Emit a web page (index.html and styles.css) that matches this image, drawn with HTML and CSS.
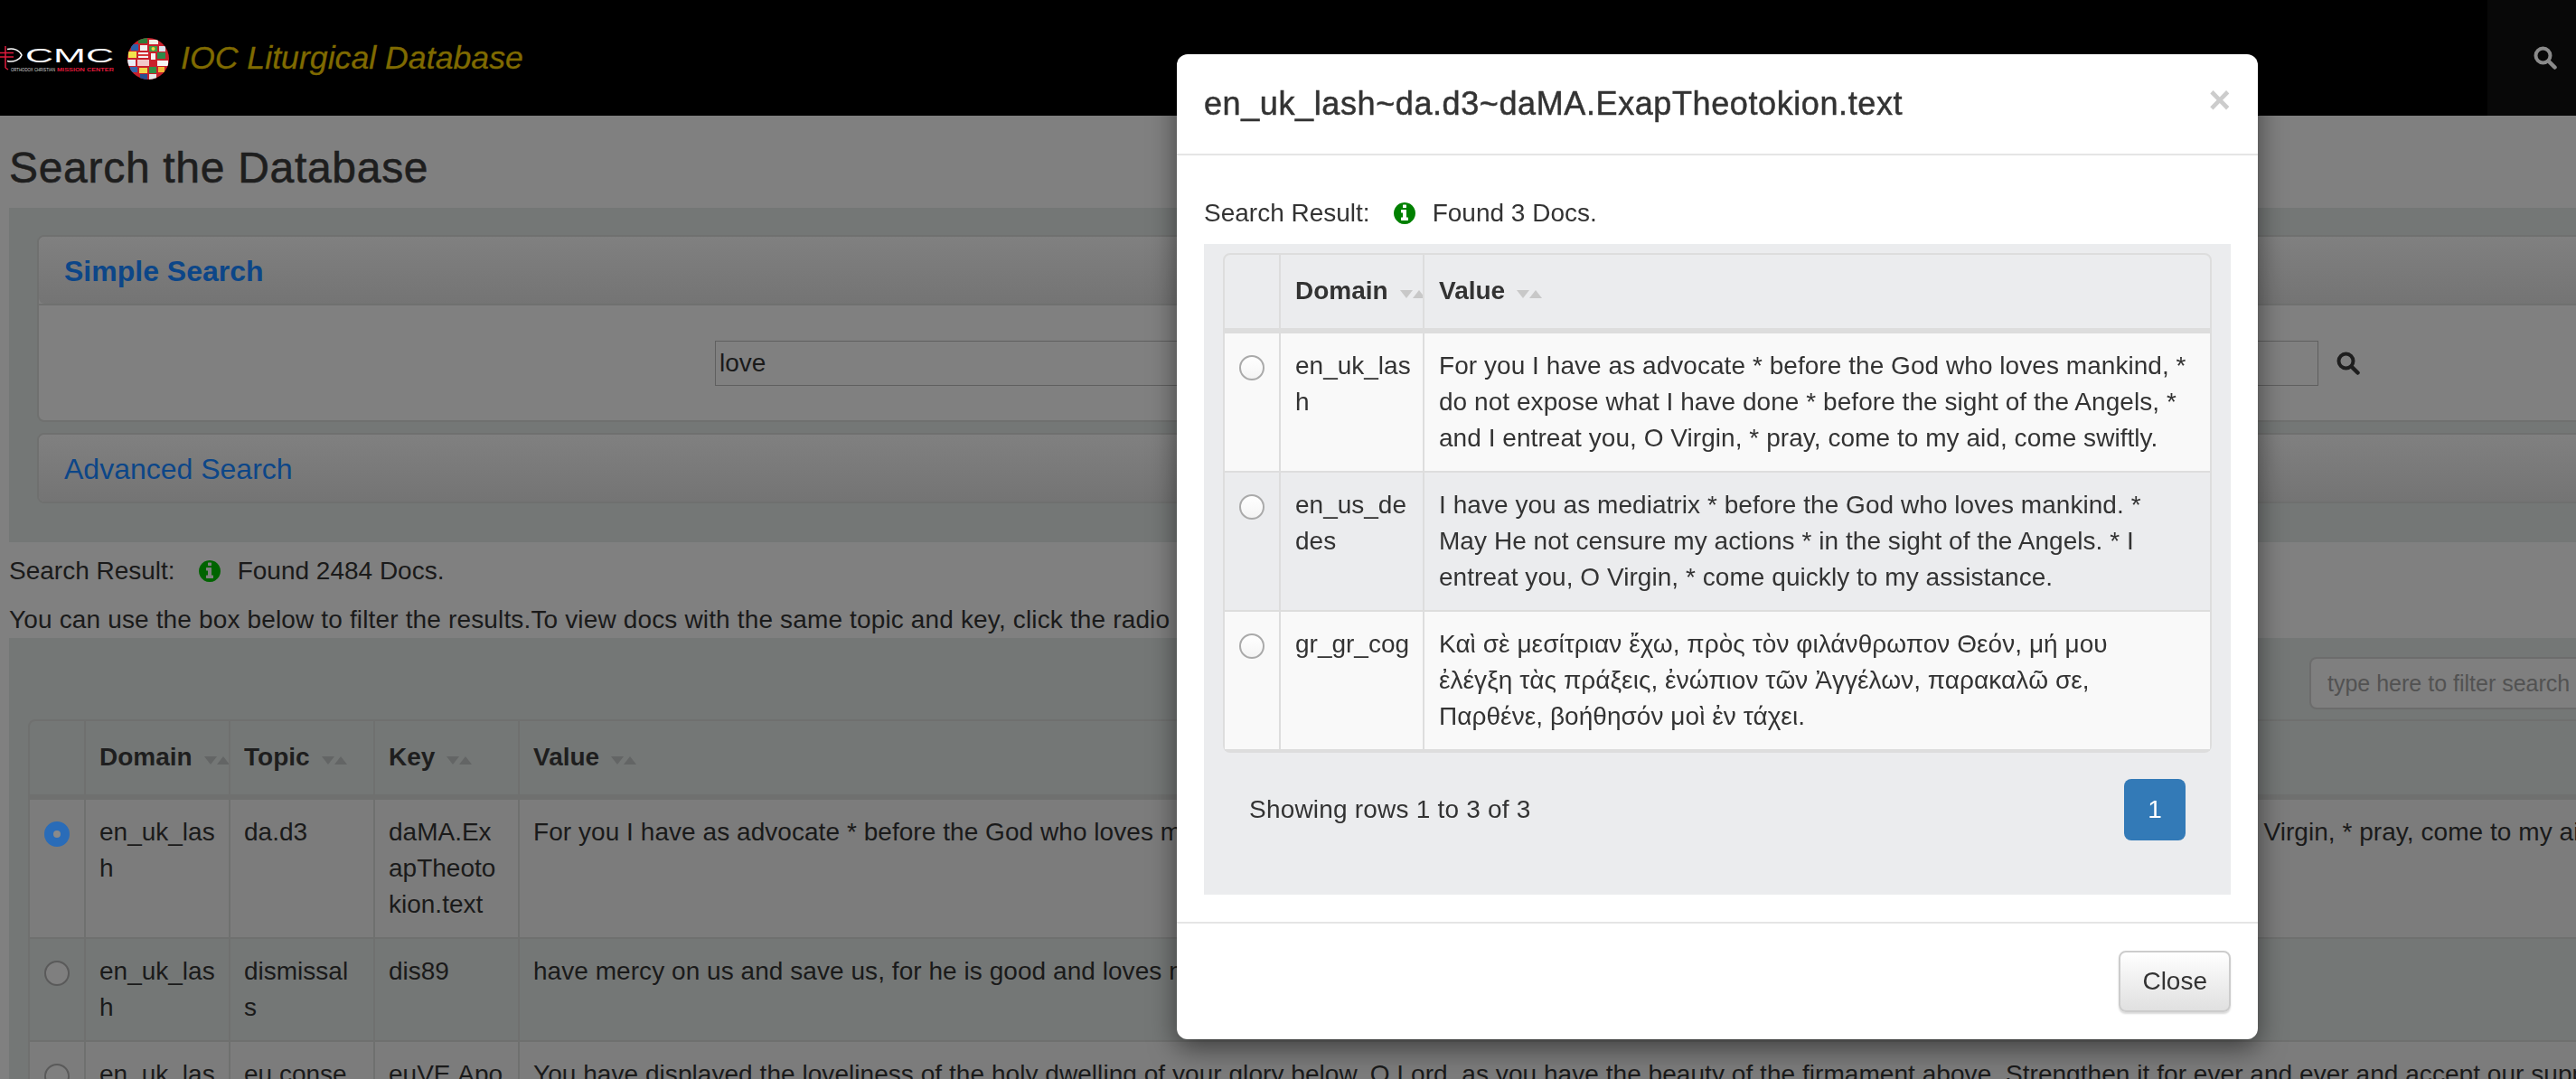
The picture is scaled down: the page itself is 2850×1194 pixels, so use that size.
FILE: index.html
```html
<!DOCTYPE html>
<html>
    <head>
        <meta charset="utf-8">
        <title>IOC Liturgical Database</title>
        <link rel="stylesheet" href="styles.css">
    </head>
    <body>
        <svg class="defs" width="0" height="0">
            <symbol id="i-info" viewBox="128 128 1536 1536">
                <path d="M1152 1376v-160q0-14-9-23t-23-9h-96v-512q0-14-9-23t-23-9h-320q-14 0-23 9t-9 23v160q0 14 9 23t23 9h96v320h-96q-14 0-23 9t-9 23v160q0 14 9 23t23 9h448q14 0 23-9t9-23zm-128-896v-160q0-14-9-23t-23-9h-192q-14 0-23 9t-9 23v160q0 14 9 23t23 9h192q14 0 23-9t9-23zm640 416q0 209-103 385.500t-279.500 279.500-385.500 103-385.500-103-279.500-279.500-103-385.500 103-385.500 279.500-279.500 385.500-103 385.500 103 279.500 279.500 103 385.500z"/>
            </symbol>
            <symbol id="i-search" viewBox="0 0 26 26">
                <circle cx="10.500" cy="10.500" r="8" fill="none" stroke="currentColor" stroke-width="4"/>
                <path d="M16.500 16.500L23.500 23.500" fill="none" stroke="currentColor" stroke-width="4.500" stroke-linecap="round"/>
            </symbol>
        </svg>

        <nav class="navbar">
            <svg class="logo" viewBox="0 48 126 32" width="126" height="32">
                <path class="logo-ring" d="M8 53.500C15 51.500 22 55 24 60C22 65 15 68.500 8 66.500"/>
                <path class="logo-cross" d="M6 50V74M0 57.500H15M0 62H15M6 74L9 76"/>
                <text class="logo-big" x="28" y="68" textLength="98" lengthAdjust="spacingAndGlyphs">CMC</text>
                <text class="logo-small" x="12" y="77.500" textLength="49" lengthAdjust="spacingAndGlyphs">ORTHODOX CHRISTIAN</text>
                <text class="logo-small logo-red" x="63" y="77.500" textLength="63" lengthAdjust="spacingAndGlyphs">MISSION CENTER</text>
            </svg>
            <svg class="globe" viewBox="0 0 46 46" width="46" height="46">
                <defs><clipPath id="globe-clip"><circle cx="23" cy="23" r="23"/></clipPath></defs>
                <g clip-path="url(#globe-clip)">
                    <rect width="46" height="46" fill="#c8202c"/>
                    <rect x="12" y="0" width="10" height="6" fill="#2f7d3a"/>
                    <rect x="24" y="2" width="10" height="5" fill="#f1efe4"/>
                    <rect x="4" y="7" width="8" height="7" fill="#2d5fa8"/>
                    <rect x="14" y="8" width="8" height="6" fill="#f2f2f2"/>
                    <rect x="24" y="9" width="9" height="6" fill="#3f9e47"/>
                    <circle cx="28.500" cy="12" r="2" fill="#f3d23a"/>
                    <rect x="35" y="9" width="7" height="6" fill="#d8e2ee"/>
                    <rect x="1" y="15" width="9" height="7" fill="#f2e34c"/>
                    <rect x="12" y="16" width="11" height="6" fill="#f4f4f4"/>
                    <rect x="12" y="18" width="11" height="2" fill="#d63a3a"/>
                    <rect x="26" y="17" width="5" height="7" fill="#f4f4f4"/>
                    <rect x="33" y="16" width="9" height="7" fill="#2c8a4a"/>
                    <rect x="0" y="24" width="9" height="7" fill="#e8eef6"/>
                    <rect x="11" y="24" width="13" height="7" fill="#f1c8c8"/>
                    <rect x="33" y="25" width="12" height="6" fill="#f5f5f5"/>
                    <rect x="3" y="32" width="8" height="6" fill="#3565ab"/>
                    <rect x="13" y="33" width="9" height="6" fill="#f0d84a"/>
                    <rect x="24" y="32" width="8" height="7" fill="#2f8f46"/>
                    <rect x="34" y="32" width="7" height="6" fill="#f0b93a"/>
                    <rect x="14" y="40" width="8" height="6" fill="#274f94"/>
                    <rect x="24" y="40" width="8" height="6" fill="#e8e8e8"/>
                </g>
            </svg>
            <a class="brand-title">IOC Liturgical Database</a>
            <div class="nav-search"><svg class="icon-search"><use href="#i-search"/></svg></div>
        </nav>

        <main class="page">
            <h3 class="page-title">Search the Database</h3>
            <section class="well search-well">
                <div class="panel">
                    <div class="panel-heading bold">Simple Search</div>
                    <div class="panel-body">
                        <input class="search-input" type="text" value="love">
                        <svg class="icon-search body-search"><use href="#i-search"/></svg>
                    </div>
                </div>
                <div class="panel">
                    <div class="panel-heading">Advanced Search</div>
                </div>
            </section>

            <div class="result-line">
                <span>Search Result:</span>
                <svg class="icon-info"><use href="#i-info"/></svg>
                <span>Found 2484 Docs.</span>
            </div>
            <p class="hint">You can use the box below to filter the results.To view docs with the same topic and key, click the radio button</p>

            <section class="well results-well">
                <div class="filter-bar">
                    <input class="filter-input" type="text" placeholder="type here to filter search results">
                </div>
                <div class="table-box">
                    <table class="grid wide">
                        <colgroup><col class="c-check"><col class="c-mid"><col class="c-mid"><col class="c-mid"><col></colgroup>
                        <thead>
                            <tr>
                                <th></th>
                                <th>Domain<span class="sort"><i class="down"></i><i class="up"></i></span></th>
                                <th>Topic<span class="sort"><i class="down"></i><i class="up"></i></span></th>
                                <th>Key<span class="sort"><i class="down"></i><i class="up"></i></span></th>
                                <th>Value<span class="sort"><i class="down"></i><i class="up"></i></span></th>
                            </tr>
                        </thead>
                        <tbody>
                            <tr class="odd">
                                <td><span class="radio on"></span></td>
                                <td>en_uk_lash</td>
                                <td>da.d3</td>
                                <td>daMA.ExapTheotokion.text</td>
                                <td class="value">For you I have as advocate * before the God who loves mankind, * do not expose what I have done * before the sight of the Angels, * and I entreat you, O Virgin, * pray, come to my aid, come swiftly.</td>
                            </tr>
                            <tr>
                                <td><span class="radio"></span></td>
                                <td>en_uk_lash</td>
                                <td>dismissals</td>
                                <td>dis89</td>
                                <td class="value">have mercy on us and save us, for he is good and loves mankind.</td>
                            </tr>
                            <tr class="odd">
                                <td><span class="radio"></span></td>
                                <td>en_uk_lash</td>
                                <td>eu.conse<br>cration</td>
                                <td>euVE.Apolytikion</td>
                                <td class="value">You have displayed the loveliness of the holy dwelling of your glory below, O Lord, as you have the beauty of the firmament above. Strengthen it for ever and ever and accept our supplications</td>
                            </tr>
                        </tbody>
                    </table>
                </div>
            </section>
        </main>

        <div class="modal">
            <div class="modal-header">
                <h4 class="modal-title">en_uk_lash~da.d3~daMA.ExapTheotokion.text</h4>
                <span class="close">×</span>
            </div>
            <div class="modal-body">
                <div class="result-line modal-result">
                    <span>Search Result:</span>
                    <svg class="icon-info"><use href="#i-info"/></svg>
                    <span>Found 3 Docs.</span>
                </div>
                <section class="well modal-well">
                    <div class="table-box">
                        <table class="grid">
                            <colgroup><col class="c-check"><col class="c-domain"><col></colgroup>
                            <thead>
                                <tr>
                                    <th></th>
                                    <th>Domain<span class="sort"><i class="down"></i><i class="up"></i></span></th>
                                    <th>Value<span class="sort"><i class="down"></i><i class="up"></i></span></th>
                                </tr>
                            </thead>
                            <tbody>
                                <tr class="odd">
                                    <td><span class="radio"></span></td>
                                    <td>en_uk_lash</td>
                                    <td class="value">For you I have as advocate * before the God who loves mankind, *<br>do not expose what I have done * before the sight of the Angels, *<br>and I entreat you, O Virgin, * pray, come to my aid, come swiftly.</td>
                                </tr>
                                <tr>
                                    <td><span class="radio"></span></td>
                                    <td>en_us_dedes</td>
                                    <td class="value">I have you as mediatrix * before the God who loves mankind. *<br>May He not censure my actions * in the sight of the Angels. * I<br>entreat you, O Virgin, * come quickly to my assistance.</td>
                                </tr>
                                <tr class="odd">
                                    <td><span class="radio"></span></td>
                                    <td>gr_gr_cog</td>
                                    <td class="value">Καὶ σὲ μεσίτριαν ἔχω, πρὸς τὸν φιλάνθρωπον Θεόν, μή μου<br>ἐλέγξη τὰς πράξεις, ἐνώπιον τῶν Ἀγγέλων, παρακαλῶ σε,<br>Παρθένε, βοήθησόν μοὶ ἐν τάχει.</td>
                                </tr>
                            </tbody>
                        </table>
                    </div>
                    <div class="table-foot">
                        <span class="rows-label">Showing rows 1 to 3 of 3</span>
                        <a class="page-btn">1</a>
                    </div>
                </section>
            </div>
            <div class="modal-footer">
                <button class="btn-close" type="button">Close</button>
            </div>
        </div>
    </body>
</html>
```

FILE: styles.css
```css
html, body {
    height: 100%;
    overflow: hidden;
}
body {
    margin: 0;
    background-color: #808080;
    color: #1a1a1a;
    font-family: "Liberation Sans", Arial, "DejaVu Sans", sans-serif;
    font-size: 28px;
    line-height: 40px;
}
.defs {
    position: absolute;
}

/* nav */
.navbar {
    display: flex;
    align-items: center;
    height: 128px;
    background-color: #000;
}
.logo {
    flex: none;
    margin-top: 1px;
}
.logo-ring {
    fill: none;
    stroke: #fff;
    stroke-width: 1.500;
}
.logo-cross {
    fill: none;
    stroke: #e01b3c;
    stroke-width: 1.500;
}
.logo-big {
    fill: #fff;
    font-size: 22px;
}
.logo-small {
    fill: #d8d8d8;
    font-size: 6px;
}
.logo-red {
    fill: #e01b3c;
    font-weight: bold;
}
.globe {
    flex: none;
    margin-left: 15px;
    margin-top: 2px;
}
.brand-title {
    margin-left: 13px;
    color: #7f6a00;
    font-size: 35.700px;
    font-style: italic;
    -webkit-text-stroke: 0.300px #7f6a00;
}
.nav-search {
    display: flex;
    align-items: center;
    align-self: stretch;
    width: 98px;
    margin-left: auto;
    padding-left: 51px;
    box-sizing: border-box;
    background-color: #080808;
    color: #8a8a8a;
}
.icon-search {
    width: 26px;
    height: 26px;
}

/* page behind the dialog */
.page {
    width: 3070px;
    padding-left: 10px;
}
.page-title {
    margin: 31px 0 18px;
    color: #1e1e1e;
    font-size: 48px;
    font-weight: normal;
    line-height: 53px;
    letter-spacing: 0.700px;
    -webkit-text-stroke: 0.600px #1e1e1e;
}
.well {
    background-color: #747776;
}
.search-well {
    height: 340px;
    padding: 30px 31px 0;
}
.panel {
    margin-bottom: 12px;
    border: 2px solid #6f706f;
    border-radius: 8px;
    background-color: #808080;
}
.panel-heading {
    display: flex;
    align-items: center;
    height: 72px;
    padding: 2px 28px 0;
    background: linear-gradient(#808080, #747474);
    border-radius: 6px;
    color: #0c4688;
    font-size: 32px;
}
.bold {
    font-weight: bold;
}
.panel-body {
    display: flex;
    align-items: center;
    height: 129px;
    padding-left: 748px;
    border-top: 2px solid #6f706f;
    box-sizing: border-box;
}
.search-input {
    width: 1774px;
    height: 50px;
    padding: 0 4px;
    box-sizing: border-box;
    border: 1px solid #5f5f5f;
    background-color: #808080;
    color: #1a1a1a;
    font-family: inherit;
    font-size: 28px;
}
.body-search {
    margin-left: 20px;
    color: #1e1e1e;
}
.result-line {
    display: flex;
    align-items: center;
    margin-top: 12px;
}
.icon-info {
    width: 24px;
    height: 24px;
    margin: 0 19px 0 26px;
    fill: #006400;
}
.hint {
    margin: 14px 0 0;
    white-space: nowrap;
    letter-spacing: 0.150px;
}
.results-well {
    padding: 10px 25px 0 21px;
}
.filter-bar {
    display: flex;
    justify-content: flex-end;
    margin: 11px 0;
}
.filter-input {
    width: 500px;
    height: 58px;
    padding: 0 18px;
    box-sizing: border-box;
    border: 2px solid #6c6c6c;
    border-radius: 8px;
    background-color: #7f7f7f;
    font-family: inherit;
    font-size: 25px;
}
.filter-input::placeholder {
    color: #525252;
    opacity: 1;
}

/* tables */
.table-box {
    border: 2px solid #6f706f;
    border-radius: 8px;
}
.grid {
    width: 100%;
    table-layout: fixed;
    border-collapse: separate;
    border-spacing: 0;
}
.c-check {
    width: 60px;
}
.c-mid {
    width: 160px;
}
.c-domain {
    width: 159px;
}
.grid th, .grid td {
    padding: 16px 14.500px 16px 15px;
    border-left: 2px solid #6f706f;
    border-bottom: 2px solid #6f706f;
    text-align: left;
    vertical-align: top;
    word-break: break-all;
}
.grid th:first-child, .grid td:first-child {
    padding: 0;
    border-left: 0;
}
.grid th {
    padding-top: 19px;
    padding-bottom: 21px;
    border-bottom-width: 6px;
    color: #1e1e1e;
    white-space: nowrap;
    word-break: normal;
    overflow: hidden;
}
.grid .value {
    word-break: normal;
    white-space: nowrap;
    letter-spacing: 0.050px;
}
.odd td {
    background-color: #7c7c7c;
}
.sort {
    display: inline-block;
    margin-left: 13px;
    vertical-align: 1px;
    white-space: nowrap;
}
.sort i {
    display: inline-block;
    border-left: 7.500px solid transparent;
    border-right: 7.500px solid transparent;
}
.down {
    border-top: 9px solid #636565;
}
.up {
    border-bottom: 9px solid #636565;
}
.radio {
    display: block;
    width: 28px;
    height: 28px;
    margin: 24px auto 0;
    box-sizing: border-box;
    border: 2px solid #5a5a5a;
    border-radius: 50%;
    background-color: #7f7f7f;
}
.radio.on {
    border: 10px solid #2a6cb8;
    background-color: #8a8a8a;
}

/* dialog */
.modal {
    position: fixed;
    top: 60px;
    left: 1302px;
    width: 1196px;
    border-radius: 12px;
    background-color: #fff;
    box-shadow: 0 10px 30px rgba(0,0,0,0.5);
    color: #333;
}
.modal-header {
    display: flex;
    align-items: flex-start;
    justify-content: space-between;
    padding: 30px;
    border-bottom: 2px solid #e5e5e5;
}
.modal-title {
    margin: 0;
    font-size: 36px;
    font-weight: normal;
    line-height: 50px;
    letter-spacing: 0.600px;
    -webkit-text-stroke: 0.500px #333;
}
.close {
    color: #ccc;
    font-size: 42px;
    font-weight: bold;
    line-height: 42px;
}
.modal-body {
    padding: 44px 30px 30px;
}
.modal-result {
    margin: 0 0 14px;
}
.modal .icon-info {
    fill: #008000;
}
.modal-well {
    padding: 10px 21px 60px;
    background-color: #ebecee;
}
.modal .table-box {
    border-color: #ddd;
}
.modal .grid th, .modal .grid td {
    padding-left: 16px;
    padding-right: 12.500px;
    border-color: #ddd;
}
.modal .grid th:first-child, .modal .grid td:first-child {
    padding: 0;
}
.modal .grid th {
    color: #333;
}
.modal .odd td {
    background-color: #f9f9f9;
}
.modal .down {
    border-top-color: #c8c8c8;
}
.modal .up {
    border-bottom-color: #c8c8c8;
}
.modal .radio {
    border-color: #aaa;
    background: linear-gradient(#fff, #f4f4f4);
}
.table-foot {
    display: flex;
    align-items: center;
    justify-content: space-between;
    margin-top: 29px;
    padding: 0 29px;
}
.rows-label {
    letter-spacing: 0.200px;
}
.page-btn {
    display: flex;
    align-items: center;
    justify-content: center;
    width: 68px;
    height: 68px;
    border-radius: 8px;
    background-color: #337ab7;
    color: #fff;
}
.modal-footer {
    display: flex;
    justify-content: flex-end;
    padding: 30px;
    border-top: 2px solid #e5e5e5;
}
.btn-close {
    height: 68px;
    padding: 0 24px;
    border: 2px solid #ccc;
    border-radius: 8px;
    background: linear-gradient(#fff, #e0e0e0);
    box-shadow: 0 2px 2px rgba(0,0,0,0.15);
    color: #333;
    font-family: inherit;
    font-size: 28px;
}
```
